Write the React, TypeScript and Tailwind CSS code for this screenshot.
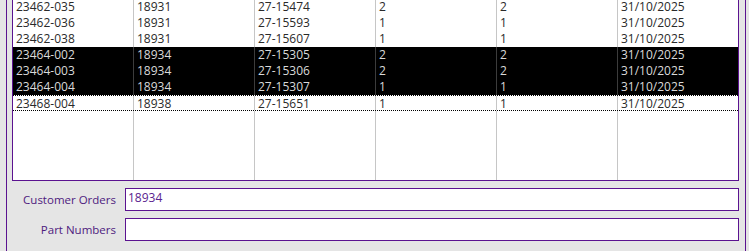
const rows = [
  ["23462-035", "18931", "27-15474", "2", "2", "31/10/2025"],
  ["23462-036", "18931", "27-15593", "1", "1", "31/10/2025"],
  ["23462-038", "18931", "27-15607", "1", "1", "31/10/2025"],
  ["23464-002", "18934", "27-15305", "2", "2", "31/10/2025"],
  ["23464-003", "18934", "27-15306", "2", "2", "31/10/2025"],
  ["23464-004", "18934", "27-15307", "1", "1", "31/10/2025"],
  ["23468-004", "18938", "27-15651", "1", "1", "31/10/2025"],
];

const selected = [3, 4, 5];
const focused = 6;

function Row({ cells, index }: { cells: string[]; index: number }) {
  const isSel = selected.includes(index);
  const isFocus = index === focused;
  return (
    <div
      className={
        "flex h-[16px] box-border " +
        (isSel ? "bg-black text-[#d9d9d9] " : "text-[#2a2a2a] ") +
        (isFocus ? "border-y border-dotted border-black" : "")
      }
    >
      {cells.map((c, i) => (
        <div
          key={i}
          className={
            "pl-[3px] leading-[16px] whitespace-nowrap " +
            (i < 5 ? "w-[121px] border-r " : "w-[120px] ") +
            (isSel ? "border-[#3c3c3c]" : "border-[#c6c6c6]")
          }
        >
          {c}
        </div>
      ))}
    </div>
  );
}

function Field({ label, value }: { label: string; value?: string }) {
  return (
    <div className="flex items-center">
      <div className="w-[109px] text-right text-[11.5px] text-[#4e1a7e]">{label}</div>
      <div className="ml-[9px] w-[614px] h-[23px] border border-[#5b1390] bg-white px-[2px] text-[12px] leading-[18px] text-[#5a2390]">
        {value}
      </div>
    </div>
  );
}

export default function App() {
  return (
    <div className="w-[749px] h-[251px] overflow-hidden bg-[#e5e5e5] font-['Open_Sans',sans-serif]">
      <div className="ml-[6px] flex h-full w-[740px] flex-col border-x border-[#5b1390]">
        <div className="ml-[5px] flex h-[181px] w-[727px] flex-col overflow-hidden border-x border-b border-[#5b1390] bg-white text-[12px]">
          <div className="-mt-px flex flex-col">
            {rows.map((r, i) => (
              <Row key={i} cells={r} index={i} />
            ))}
          </div>
          <div className="flex flex-1">
            {[0, 1, 2, 3, 4, 5].map((i) => (
              <div
                key={i}
                className={i < 5 ? "w-[121px] border-r border-[#c6c6c6]" : "w-[120px]"}
              />
            ))}
          </div>
        </div>
        <div className="mt-[7px]">
          <Field label="Customer Orders" value="18934" />
        </div>
        <div className="mt-[7px]">
          <Field label="Part Numbers" />
        </div>
      </div>
    </div>
  );
}
